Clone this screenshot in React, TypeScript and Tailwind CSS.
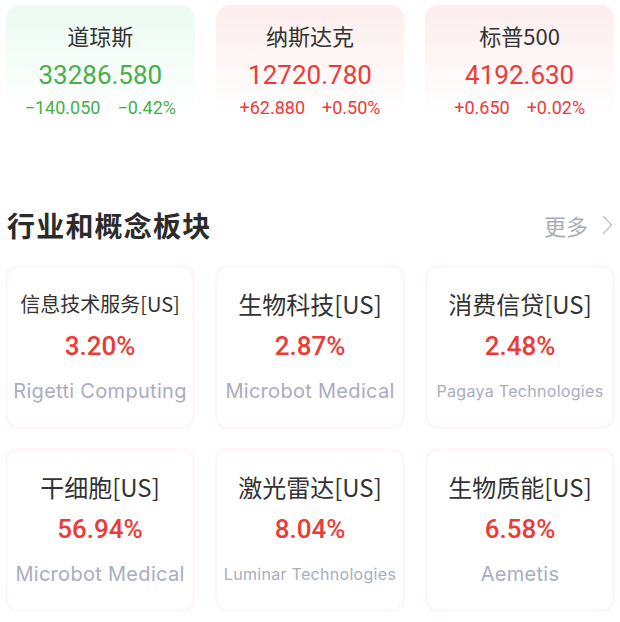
type Index = { name: string; value: string; change: string; pct: string; up: boolean }
type Sector = { name: string; pct: string; company: string; small?: boolean; smallTitle?: boolean }

const indices: Index[] = [
  { name: '道琼斯', value: '33286.580', change: '−140.050', pct: '−0.42%', up: false },
  { name: '纳斯达克', value: '12720.780', change: '+62.880', pct: '+0.50%', up: true },
  { name: '标普500', value: '4192.630', change: '+0.650', pct: '+0.02%', up: true },
]

const sectors: Sector[] = [
  { name: '信息技术服务[US]', pct: '3.20%', company: 'Rigetti Computing', smallTitle: true },
  { name: '生物科技[US]', pct: '2.87%', company: 'Microbot Medical' },
  { name: '消费信贷[US]', pct: '2.48%', company: 'Pagaya Technologies', small: true },
  { name: '干细胞[US]', pct: '56.94%', company: 'Microbot Medical' },
  { name: '激光雷达[US]', pct: '8.04%', company: 'Luminar Technologies', small: true },
  { name: '生物质能[US]', pct: '6.58%', company: 'Aemetis' },
]

const cjk = "font-['Noto_Sans_CJK_SC','Noto_Sans',sans-serif]"
const num = "font-['Roboto','Noto_Sans_CJK_SC',sans-serif]"

export default function App() {
  return (
    <div className="w-[620px] h-[622px] bg-white overflow-hidden">
      {/* Index cards */}
      <div className="grid grid-cols-3 gap-[21px] px-[6px] pt-[5px]">
        {indices.map((i) => (
          <div
            key={i.name}
            className={`h-[110px] rounded-t-[14px] flex flex-col items-center ${
              i.up ? 'bg-gradient-to-b from-[#fdeded] to-[#ffffff]' : 'bg-gradient-to-b from-[#ebfbf2] to-[#ffffff]'
            }`}
          >
            <div className={`mt-[16px] h-[28px] leading-[28px] text-[22px] text-[#333333] ${cjk}`}>{i.name}</div>
            <div
              className={`mt-[10px] h-[32px] leading-[32px] text-[26px] ${num} ${i.up ? 'text-[#ee3a36]' : 'text-[#45b04a]'}`}
            >
              {i.value}
            </div>
            <div
              className={`mt-[6px] h-[22px] leading-[22px] text-[18px] flex gap-[17px] ${num} ${
                i.up ? 'text-[#ee3a36]' : 'text-[#45b04a]'
              }`}
            >
              <span>{i.change}</span>
              <span>{i.pct}</span>
            </div>
          </div>
        ))}
      </div>

      {/* Section header */}
      <div className="mt-[92px] flex items-center justify-between pl-[7px] pr-[7px] h-[36px]">
        <h2 className={`text-[28px] font-bold tracking-[1.2px] text-[#2b2b2b] leading-[36px] ${cjk}`}>行业和概念板块</h2>
        <div className={`flex items-center gap-[14px] text-[22px] text-[#a9acba] ${cjk}`}>
          <span>更多</span>
          <svg width="11" height="20" viewBox="0 0 11 20" fill="none" className="text-[#c3c5cf]">
            <path d="M1.5 1.5 L9.5 10 L1.5 18.5" stroke="currentColor" strokeWidth="1.6" strokeLinecap="round" strokeLinejoin="round" />
          </svg>
        </div>
      </div>

      {/* Sector cards */}
      <div className="mt-[22px] grid grid-cols-3 gap-x-[20px] gap-y-[19px] px-[5px]">
        {sectors.map((s) => (
          <div
            key={s.name}
            className="h-[164px] rounded-[12px] border-[3px] border-[#fef7f9] bg-white flex flex-col items-center"
          >
            <div
              className={`mt-[22px] h-[28px] leading-[28px] text-[#333333] ${cjk} ${
                s.smallTitle ? 'text-[20px]' : 'text-[24px]'
              }`}
            >
              {s.name}
            </div>
            <div className={`mt-[12px] h-[32px] leading-[32px] text-[26px] font-medium text-[#ee3a36] ${num}`}>
              {s.pct}
            </div>
            <div
              className={`mt-[17px] h-[24px] leading-[24px] text-[#a9adbf] whitespace-nowrap font-['Inter','Noto_Sans',sans-serif] ${
                s.small ? 'text-[16px] tracking-[0.3px]' : 'text-[20px] tracking-[0.3px]'
              }`}
            >
              {s.company}
            </div>
          </div>
        ))}
      </div>
    </div>
  )
}
